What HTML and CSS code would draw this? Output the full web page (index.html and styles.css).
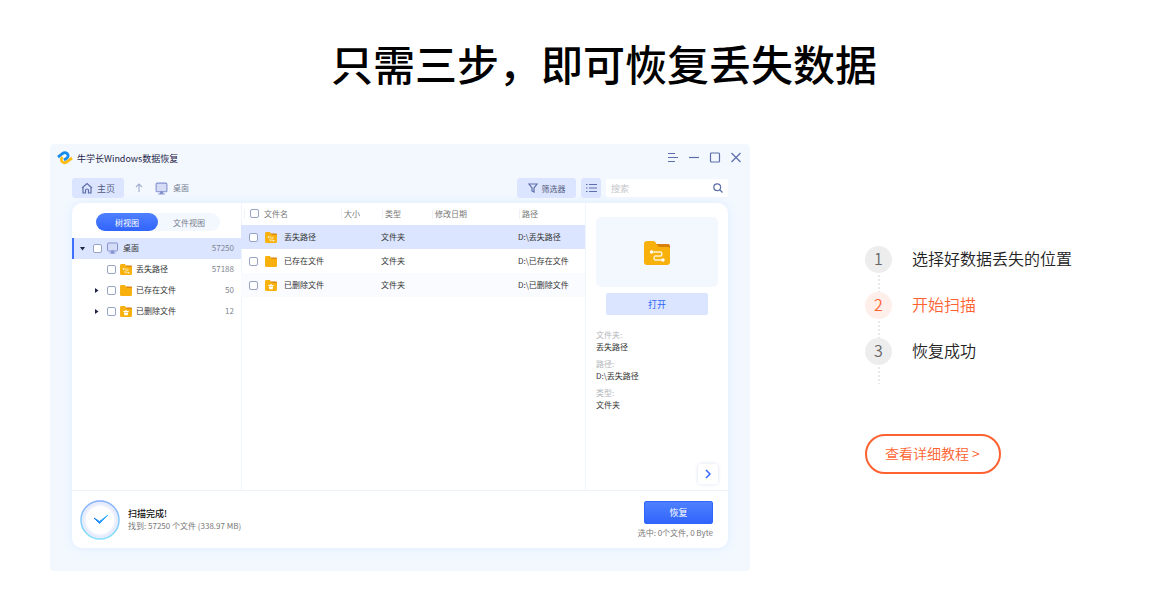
FILE: index.html
```html
<!DOCTYPE html>
<html lang="zh-CN">
<head>
    <meta charset="UTF-8">
    <meta name="viewport" content="width=device-width, initial-scale=1">
    <title>只需三步，即可恢复丢失数据</title>
    <link rel="stylesheet" href="styles.css">
</head>
<body>
    <!-- shared icons -->
    <svg class="sprite" width="0" height="0" aria-hidden="true">
        <symbol id="folder" viewBox="0 0 26 24">
            <path d="M12 3h12a2 2 0 0 1 2 2v5H12z" fill="#d97f0b"/>
            <path d="M0 3a3 3 0 0 1 3-3h6c2 0 2.500 1 3.500 3s2 3 4 3H24a2 2 0 0 1 2 2v13a3 3 0 0 1-3 3H3a3 3 0 0 1-3-3z" fill="#f8b10c"/>
        </symbol>
        <symbol id="route" viewBox="0 0 26 24">
            <path d="M8 11h9a3 3 0 0 1 0 4h-6a2.500 2.500 0 0 0 0 4h7" fill="none" stroke="#fff3d0" stroke-width="1.500"/>
            <circle cx="7.500" cy="11" r="1.700" fill="#fff"/>
            <circle cx="19" cy="19" r="1.700" fill="#fff"/>
        </symbol>
        <symbol id="bin" viewBox="0 0 26 24">
            <path d="M7 11h12v2H7zM8 14h10l-1.500 6h-7zM11 9h4v2h-4z" fill="#fff"/>
        </symbol>
        <symbol id="monitor" viewBox="0 0 12 12">
            <rect x="1" y="1" width="10" height="8" rx="1" fill="#d5dcf5" stroke="#8492cf"/>
            <path d="M5 9h2v2H5zM3 11h6" fill="#8492cf" stroke="#8492cf"/>
        </symbol>
    </svg>

    <section class="guide">
        <h1 class="guide-title">只需三步，即可恢复丢失数据</h1>
        <div class="guide-content">
            <div class="app">
                <div class="titlebar">
                    <svg class="logo" width="16" height="14" viewBox="0 0 16 14" fill="none" stroke-width="2.800" stroke-linejoin="round">
                        <path d="M1 6.200l4.500-3.700C8 .8 10.300 2 11 4c.5 1.500-.2 2.400-1.500 3.300L7 9" stroke="#168bf0"/>
                        <path d="M5.500 6C3.800 7.500 4 9.800 5.500 11c1.500 1.200 3 .8 4.300-.2L15 7" stroke="#ffbd14"/>
                    </svg>
                    <span class="app-name">牛学长Windows数据恢复</span>
                    <div class="window-buttons">
                        <button type="button" aria-label="菜单"><svg width="12" height="12" viewBox="0 0 12 12"><path d="M1 1.500h7M1 5.500h10M1 9.500h7"/></svg></button>
                        <button type="button" aria-label="最小化"><svg width="12" height="12" viewBox="0 0 12 12"><path d="M1 5.500h10"/></svg></button>
                        <button type="button" aria-label="最大化"><svg width="12" height="12" viewBox="0 0 12 12"><rect x="1.500" y="1" width="9" height="9" rx="1"/></svg></button>
                        <button type="button" aria-label="关闭"><svg width="12" height="12" viewBox="0 0 12 12"><path d="M1.500 1l9 9M10.500 1l-9 9"/></svg></button>
                    </div>
                </div>

                <div class="toolbar">
                    <button type="button" class="tool home">
                        <svg width="12" height="12" viewBox="0 0 12 12"><path d="M1 6l5-4.500L11 6M2 5v6h2.500V8.500a1.500 1.500 0 0 1 3 0V11H10V5"/></svg>
                        主页
                    </button>
                    <svg class="up" width="8" height="10" viewBox="0 0 8 10"><path d="M4 9V1M1 4l3-3 3 3"/></svg>
                    <svg width="13" height="13"><use href="#monitor"/></svg>
                    <span class="crumb">桌面</span>
                    <button type="button" class="tool filter">
                        <svg width="10" height="10" viewBox="0 0 10 10"><path d="M1 1h8L6 5v4L4 8V5z"/></svg>
                        筛选器
                    </button>
                    <button type="button" class="tool list" aria-label="列表"><svg width="11" height="10" viewBox="0 0 11 10"><path d="M3 1.500h8M3 5h8M3 8.500h8M0 1.500h1.500M0 5h1.500M0 8.500h1.500"/></svg></button>
                    <div class="search">
                        <input type="text" placeholder="搜索" aria-label="搜索">
                        <svg width="10" height="10" viewBox="0 0 10 10"><circle cx="4.200" cy="4.200" r="3.400"/><path d="M7 7l2.500 2.500"/></svg>
                    </div>
                </div>

                <div class="card">
                    <div class="panels">
                        <div class="tree-panel">
                            <div class="tabs">
                                <button type="button" class="tab active">树视图</button>
                                <button type="button" class="tab">文件视图</button>
                            </div>
                            <ul class="tree">
                                <li class="node root">
                                    <svg class="arrow" width="5" height="5" viewBox="0 0 5 5"><path d="M0 1h5L2.500 4.500z"/></svg>
                                    <input type="checkbox" id="t0">
                                    <svg width="13" height="12"><use href="#monitor"/></svg>
                                    <label for="t0">桌面</label>
                                    <span class="count">57250</span>
                                </li>
                                <li class="node">
                                    <span class="arrow"></span>
                                    <input type="checkbox" id="t1">
                                    <svg width="12" height="11" viewBox="0 0 26 24"><use href="#folder"/><use href="#route"/></svg>
                                    <label for="t1">丢失路径</label>
                                    <span class="count">57188</span>
                                </li>
                                <li class="node">
                                    <svg class="arrow" width="5" height="5" viewBox="0 0 5 5"><path d="M1 0v5l3.500-2.500z"/></svg>
                                    <input type="checkbox" id="t2">
                                    <svg width="12" height="11" viewBox="0 0 26 24"><use href="#folder"/></svg>
                                    <label for="t2">已存在文件</label>
                                    <span class="count">50</span>
                                </li>
                                <li class="node">
                                    <svg class="arrow" width="5" height="5" viewBox="0 0 5 5"><path d="M1 0v5l3.500-2.500z"/></svg>
                                    <input type="checkbox" id="t3">
                                    <svg width="12" height="11" viewBox="0 0 26 24"><use href="#folder"/><use href="#bin"/></svg>
                                    <label for="t3">已删除文件</label>
                                    <span class="count">12</span>
                                </li>
                            </ul>
                        </div>

                        <div class="file-panel">
                            <table class="files">
                                <colgroup>
                                    <col class="col-name"><col class="col-size"><col class="col-type"><col class="col-date"><col class="col-path">
                                </colgroup>
                                <thead>
                                    <tr>
                                        <th><div class="name"><input type="checkbox" id="all"><label for="all">文件名</label></div></th>
                                        <th>大小</th>
                                        <th>类型</th>
                                        <th>修改日期</th>
                                        <th>路径</th>
                                    </tr>
                                </thead>
                                <tbody>
                                    <tr class="selected">
                                        <td><div class="name"><input type="checkbox" id="f1"><svg width="12" height="11" viewBox="0 0 26 24"><use href="#folder"/><use href="#route"/></svg><label for="f1">丢失路径</label></div></td>
                                        <td></td>
                                        <td>文件夹</td>
                                        <td></td>
                                        <td>D:\丢失路径</td>
                                    </tr>
                                    <tr>
                                        <td><div class="name"><input type="checkbox" id="f2"><svg width="12" height="11" viewBox="0 0 26 24"><use href="#folder"/></svg><label for="f2">已存在文件</label></div></td>
                                        <td></td>
                                        <td>文件夹</td>
                                        <td></td>
                                        <td>D:\已存在文件</td>
                                    </tr>
                                    <tr class="alt">
                                        <td><div class="name"><input type="checkbox" id="f3"><svg width="12" height="11" viewBox="0 0 26 24"><use href="#folder"/><use href="#bin"/></svg><label for="f3">已删除文件</label></div></td>
                                        <td></td>
                                        <td>文件夹</td>
                                        <td></td>
                                        <td>D:\已删除文件</td>
                                    </tr>
                                </tbody>
                            </table>
                        </div>

                        <div class="detail-panel">
                            <div class="preview"><svg width="26" height="24" viewBox="0 0 26 24"><use href="#folder"/><use href="#route"/></svg></div>
                            <button type="button" class="open">打开</button>
                            <dl class="info">
                                <dt>文件夹:</dt>
                                <dd>丢失路径</dd>
                                <dt>路径:</dt>
                                <dd>D:\丢失路径</dd>
                                <dt>类型:</dt>
                                <dd>文件夹</dd>
                            </dl>
                            <button type="button" class="next" aria-label="展开"><svg width="6" height="10" viewBox="0 0 6 10"><path d="M1 1l4 4-4 4"/></svg></button>
                        </div>
                    </div>

                    <div class="status">
                        <svg width="40" height="40" viewBox="0 0 40 40" fill="none">
                            <defs>
                                <linearGradient id="ring" x1="0" y1="0" x2="0" y2="1"><stop offset="0" stop-color="#86aefb"/><stop offset="1" stop-color="#83e4fb"/></linearGradient>
                                <linearGradient id="tick" x1="0" y1="0" x2="1" y2="0"><stop offset="0" stop-color="#1a7bfb"/><stop offset="1" stop-color="#37bdfb"/></linearGradient>
                            </defs>
                            <circle cx="20" cy="20" r="19" fill="#e6ecfd" stroke="url(#ring)" stroke-width="1.500"/>
                            <circle cx="20" cy="20" r="15.500" fill="#f1f4fe"/>
                            <circle cx="20" cy="20" r="14" fill="#fff"/>
                            <path d="M14 18l5.500 3.500 8.500-6.500-8.500 8.500z" fill="url(#tick)" stroke="url(#tick)"/>
                        </svg>
                        <div class="result">
                            <strong>扫描完成!</strong>
                            <span>找到: 57250 个文件 (338.97 MB)</span>
                        </div>
                        <div class="actions">
                            <button type="button" class="recover">恢复</button>
                            <span>选中: 0个文件, 0 Byte</span>
                        </div>
                    </div>
                </div>
            </div>

            <div class="steps-box">
                <ol class="steps">
                    <li class="step"><span class="num">1</span><span>选择好数据丢失的位置</span></li>
                    <li class="step current"><span class="num">2</span><span>开始扫描</span></li>
                    <li class="step"><span class="num">3</span><span>恢复成功</span></li>
                </ol>
                <a class="more" href="#">查看详细教程 &gt;</a>
            </div>
        </div>
    </section>
</body>
</html>
```
FILE: styles.css
```css
* {
    box-sizing: border-box;
}
body {
    margin: 0;
    background: #fff;
    color: #222;
    font-family: "Noto Sans CJK SC", sans-serif;
}
button, input {
    margin: 0;
    padding: 0;
    border: none;
    background: none;
    font-family: inherit;
}
button {
    cursor: pointer;
}
svg {
    flex: none;
    display: block;
}
.sprite {
    position: absolute;
}
.guide {
    padding: 33px 0 40px 50px;
}
.guide-title {
    margin: 0 0 51px;
    font-size: 42px;
    font-weight: 500;
    line-height: 60px;
    text-align: center;
    color: #000;
}
.guide-content {
    display: flex;
    align-items: center;
    gap: 115px;
}

/* app window */
.app {
    flex: 0 1 700px;
    min-width: 0;
    padding: 4px 22px 23px;
    border-radius: 4px;
    background: #f3f8ff;
    font-size: 8px;
    line-height: 12px;
}
.titlebar {
    display: flex;
    align-items: center;
    gap: 4px;
    height: 20px;
    margin: 0 -14px 0 -15px;
}
.app-name {
    padding-top: 2px;
    font-size: 9px;
    color: #1f2547;
}
.window-buttons {
    display: flex;
    gap: 9px;
    margin-left: auto;
}
.window-buttons svg, .tool svg, .search svg, .up {
    fill: none;
    stroke: #5d6ea8;
    stroke-width: 1.2;
}
.toolbar {
    display: flex;
    align-items: center;
    height: 20px;
    margin: 10px 0 5px;
    color: #767d91;
}
.tool {
    display: flex;
    align-items: center;
    justify-content: center;
    gap: 4px;
    height: 20px;
    border-radius: 3px;
    background: #dce5ff;
    font-size: 8px;
    color: #525b7c;
}
.home {
    width: 52px;
    font-size: 9px;
}
.up {
    margin: 0 12px 0 11px;
    opacity: .5;
}
.crumb {
    margin-left: 5px;
}
.filter {
    width: 59px;
    margin-left: auto;
}
.list {
    width: 20px;
    margin: 0 5px;
}
.search {
    display: flex;
    align-items: center;
    width: 122px;
    height: 18px;
    padding: 0 5px;
    border-radius: 2px;
    background: #fff;
}
.search input {
    flex: 1;
    min-width: 0;
    font-size: 9px;
    outline: none;
}
.search input::placeholder {
    color: #c3c5cb;
}

.card {
    border-radius: 10px;
    background: #fff;
    box-shadow: 0 0 10px #dcecff;
    overflow: hidden;
}
.panels {
    display: flex;
    height: 287px;
}
input[type="checkbox"] {
    flex: none;
    width: 9px;
    height: 9px;
    border: 1px solid #97a3c7;
    border-radius: 2px;
    background: #fff;
    appearance: none;
}
.tree-panel {
    width: 169px;
    padding-top: 10px;
}
.tabs {
    display: flex;
    width: 124px;
    margin: 0 auto 7px 24px;
    border-radius: 9px;
    background: #f3f8ff;
}
.tab {
    width: 62px;
    height: 18px;
    border-radius: 9px;
    font-size: 8px;
    color: #777d8c;
}
.tab.active {
    background: linear-gradient(#4f80ff, #3165fb);
    color: #fff;
}
.tree {
    margin: 0;
    padding: 0;
    list-style: none;
}
.node {
    display: flex;
    align-items: center;
    gap: 4px;
    height: 21px;
    padding: 0 7px 1px 22px;
    color: #333;
}
.node.root {
    padding-left: 6px;
    border-left: 2px solid #3d70ff;
    background: #dce5ff;
}
.arrow {
    width: 5px;
    margin-right: 4px;
    fill: #1f2547;
}
.count {
    margin-left: auto;
    color: #80848e;
}

.file-panel {
    flex: 1;
    min-width: 0;
    border-right: 1px solid #f0f4fd;
    box-shadow: inset 1px 0 #f0f4fd;
}
.files {
    width: 100%;
    border-collapse: collapse;
    table-layout: fixed;
}
.col-name {
    width: 99px;
}
.col-size {
    width: 41px;
}
.col-type {
    width: 50px;
}
.col-date {
    width: 87px;
}
.files th {
    height: 22px;
    padding: 0 0 1px 4px;
    background: linear-gradient(#eef1f8, #eef1f8) 1px center / 1px 10px no-repeat;
    font-weight: normal;
    text-align: left;
    color: #777;
}
.files th:first-child {
    padding-left: 9px;
    background-position: 3px center;
}
.files td {
    height: 24px;
    padding: 0;
    color: #333;
}
.files td:first-child {
    padding-left: 8px;
}
.selected {
    background: #dce5ff;
}
.alt {
    background: #f9fbff;
}
.name {
    display: flex;
    align-items: center;
    gap: 5px;
}
td .name {
    gap: 7px;
}

.detail-panel {
    display: flex;
    flex-direction: column;
    width: 142px;
    padding: 14px 10px 6px;
}
.preview {
    display: flex;
    align-items: center;
    justify-content: center;
    height: 70px;
    padding-top: 2px;
    border-radius: 5px;
    background: #f3f8ff;
}
.open {
    height: 22px;
    margin: 6px 10px 14px;
    border-radius: 2px;
    background: #dce5ff;
    font-size: 9px;
    color: #3165fb;
}
.info {
    margin: 0;
}
.info dt {
    color: #b4b6bb;
}
.info dd {
    margin: 0 0 5px;
    color: #333;
}
.next {
    display: flex;
    align-items: center;
    justify-content: center;
    align-self: flex-end;
    width: 20px;
    height: 20px;
    margin-top: auto;
    border-radius: 3px;
    background: #fff;
    box-shadow: 0 0 4px #dde3f5;
}
.next svg {
    fill: none;
    stroke: #3165fb;
    stroke-width: 1.5;
}

.status {
    display: flex;
    align-items: center;
    gap: 8px;
    height: 58px;
    padding: 0 15px 0 8px;
    border-top: 1px solid #eef2fc;
    color: #777;
}
.result {
    display: flex;
    flex-direction: column;
}
.result strong {
    font-size: 9px;
    font-weight: 500;
    color: #111;
}
.actions {
    display: flex;
    flex-direction: column;
    align-items: flex-end;
    gap: 3px;
    margin-left: auto;
}
.recover {
    width: 69px;
    height: 23px;
    border: 1px solid #3165fb;
    border-radius: 2px;
    background: linear-gradient(#4f80ff, #3165fb);
    font-size: 9px;
    color: #fff;
}

/* steps */
.steps-box {
    flex: 1;
    padding-top: 4px;
}
.steps {
    margin: 0 0 50px;
    padding: 0;
    list-style: none;
}
.step {
    display: flex;
    gap: 20px;
    height: 46px;
    background: linear-gradient(#e8e8e8 50%, transparent 50%) 13px 1px / 2px 4px repeat-y;
    font-size: 16px;
    font-weight: 350;
    line-height: 25px;
    color: #222;
}
.num {
    width: 27px;
    height: 27px;
    border-radius: 50%;
    background: #ededed;
    text-align: center;
    color: #666;
}
.step.current {
    color: #ff6231;
}
.current .num {
    background: #ffefea;
    color: #ff6231;
}
.more {
    display: inline-block;
    padding: 0 19px 2px 18px;
    border: 2px solid #ff6231;
    border-radius: 20px;
    font-size: 14px;
    font-weight: 350;
    line-height: 34px;
    text-decoration: none;
    color: #ff6231;
}
```
